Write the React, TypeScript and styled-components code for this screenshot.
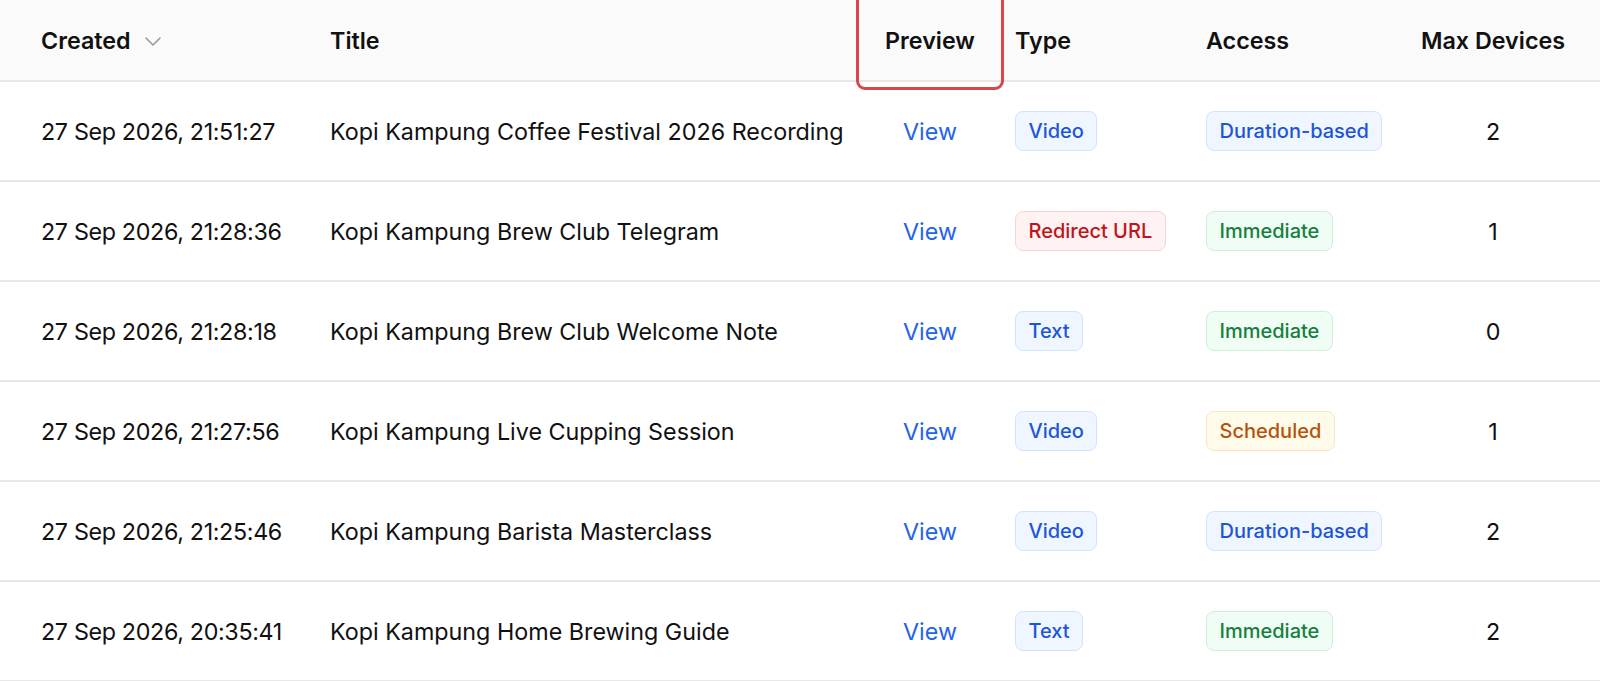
import React from 'react';
import styled, { createGlobalStyle } from 'styled-components';

const GlobalStyle = createGlobalStyle`
  html, body {
    margin: 0;
    padding: 0;
    background: #ffffff;
  }
  body {
    font-family: Inter, 'Noto Sans', sans-serif;
    color: #111111;
    overflow: hidden;
  }
`;

const COLUMNS = '289px 545px 150px 181px 200px 1fr';

const Table = styled.div`
  width: 1600px;
  display: flex;
  flex-direction: column;
`;

const HeaderRow = styled.div`
  display: grid;
  grid-template-columns: ${COLUMNS};
  padding-left: 21px;
  height: 80px;
  background: #fafafa;
  border-bottom: 2px solid #e8e8e8;
`;

const BodyRow = styled.div`
  display: grid;
  grid-template-columns: ${COLUMNS};
  padding-left: 21px;
  height: 98px;
  border-bottom: 2px solid #e8e8e8;
`;

type Align = 'left' | 'center';

const Cell = styled.div<{ $align?: Align; $pad?: number; $tight?: boolean }>`
  position: relative;
  display: flex;
  align-items: center;
  justify-content: ${(p) => (p.$align === 'center' ? 'center' : 'flex-start')};
  padding: 0 ${(p) => (p.$pad ?? 20)}px;
  font-size: 23.3px;
  letter-spacing: ${(p) => (p.$tight ? '-0.35px' : 'normal')};
  white-space: nowrap;
`;

const HeadCell = styled(Cell)`
  font-weight: 600;
  color: #111111;
`;

const SortChevron = styled.svg`
  width: 20px;
  height: 20px;
  margin-left: 12px;
  margin-top: 1px;
  color: #9a9a9a;
`;

const Highlight = styled.div`
  position: absolute;
  left: 1px;
  right: 1px;
  top: -12px;
  bottom: -10px;
  border: 3px solid #d9474e;
  border-radius: 9px;
  pointer-events: none;
`;

const ViewLink = styled.a`
  color: #2563eb;
  font-size: 23.3px;
  text-decoration: none;
  cursor: pointer;
`;

type Tone = 'blue' | 'red' | 'green' | 'amber';

const tones: Record<Tone, { bg: string; border: string; fg: string }> = {
  blue: { bg: '#eff6ff', border: '#d3e3fd', fg: '#1d55d8' },
  red: { bg: '#fef2f2', border: '#fbd3d6', fg: '#c0141b' },
  green: { bg: '#f0fdf4', border: '#cdeedb', fg: '#15803d' },
  amber: { bg: '#fffbeb', border: '#fbe4c0', fg: '#b4530a' },
};

const Badge = styled.span<{ $tone: Tone }>`
  display: inline-flex;
  align-items: center;
  height: 38px;
  padding: 0 12.5px;
  border-radius: 8px;
  font-size: 20px;
  font-weight: 500;
  background: ${(p) => tones[p.$tone].bg};
  border: 1.5px solid ${(p) => tones[p.$tone].border};
  color: ${(p) => tones[p.$tone].fg};
`;

type Item = {
  created: string;
  title: string;
  type: string;
  typeTone: Tone;
  access: string;
  accessTone: Tone;
  devices: number;
};

const items: Item[] = [
  { created: '27 Sep 2026, 21:51:27', title: 'Kopi Kampung Coffee Festival 2026 Recording', type: 'Video', typeTone: 'blue', access: 'Duration-based', accessTone: 'blue', devices: 2 },
  { created: '27 Sep 2026, 21:28:36', title: 'Kopi Kampung Brew Club Telegram', type: 'Redirect URL', typeTone: 'red', access: 'Immediate', accessTone: 'green', devices: 1 },
  { created: '27 Sep 2026, 21:28:18', title: 'Kopi Kampung Brew Club Welcome Note', type: 'Text', typeTone: 'blue', access: 'Immediate', accessTone: 'green', devices: 0 },
  { created: '27 Sep 2026, 21:27:56', title: 'Kopi Kampung Live Cupping Session', type: 'Video', typeTone: 'blue', access: 'Scheduled', accessTone: 'amber', devices: 1 },
  { created: '27 Sep 2026, 21:25:46', title: 'Kopi Kampung Barista Masterclass', type: 'Video', typeTone: 'blue', access: 'Duration-based', accessTone: 'blue', devices: 2 },
  { created: '27 Sep 2026, 20:35:41', title: 'Kopi Kampung Home Brewing Guide', type: 'Text', typeTone: 'blue', access: 'Immediate', accessTone: 'green', devices: 2 },
];

export default function App() {
  return (
    <>
      <GlobalStyle />
      <Table>
        <HeaderRow>
          <HeadCell>
            Created
            <SortChevron viewBox="0 0 20 20" fill="none" stroke="currentColor" strokeWidth={1.6} strokeLinecap="round" strokeLinejoin="round">
              <path d="M3 7l7 7 7-7" />
            </SortChevron>
          </HeadCell>
          <HeadCell>Title</HeadCell>
          <HeadCell $align="center" $pad={0}>
            Preview
            <Highlight />
          </HeadCell>
          <HeadCell $pad={10}>Type</HeadCell>
          <HeadCell>Access</HeadCell>
          <HeadCell $align="center" $pad={0}>Max Devices</HeadCell>
        </HeaderRow>
        {items.map((item) => (
          <BodyRow key={item.created}>
            <Cell $tight>{item.created}</Cell>
            <Cell>{item.title}</Cell>
            <Cell $align="center" $pad={0}>
              <ViewLink>View</ViewLink>
            </Cell>
            <Cell $pad={10}>
              <Badge $tone={item.typeTone}>{item.type}</Badge>
            </Cell>
            <Cell>
              <Badge $tone={item.accessTone}>{item.access}</Badge>
            </Cell>
            <Cell $align="center" $pad={0}>{item.devices}</Cell>
          </BodyRow>
        ))}
      </Table>
    </>
  );
}
